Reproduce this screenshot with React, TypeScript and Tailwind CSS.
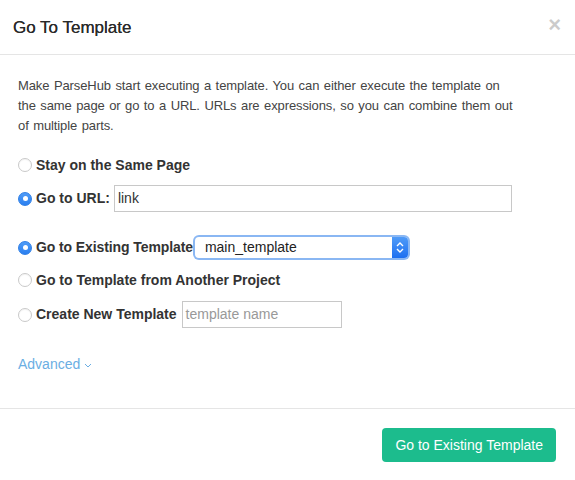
import React from "react";

function Radio({ checked }: { checked?: boolean }) {
  if (checked) {
    return (
      <span className="inline-flex h-[14px] w-[14px] shrink-0 items-center justify-center rounded-full bg-gradient-to-b from-[#4f9cf7] to-[#2a7ff0] border border-[#2f7fe6]">
        <span className="h-[5px] w-[5px] rounded-full bg-white" />
      </span>
    );
  }
  return (
    <span className="inline-block h-[14px] w-[14px] shrink-0 rounded-full border border-[#c9c9c9] bg-white shadow-[inset_0_1px_1px_rgba(0,0,0,0.05)]" />
  );
}

export default function App() {
  return (
    <div
      className="w-[575px] h-[480px] bg-white text-[#333] overflow-hidden"
      style={{ fontFamily: '"Liberation Sans", Arial, sans-serif' }}
    >
      {/* Header */}
      <div className="h-[55px] border-b border-[#e5e5e5] flex items-center justify-between pl-[13px] pr-[14px]">
        <h4 className="text-[17px] leading-[20px] text-[#2a2a2a] pt-[1px] [text-shadow:0_0_0.3px_#333]">Go To Template</h4>
        <span className="text-[22px] leading-none font-bold text-[#000] opacity-20 pb-[4px]">×</span>
      </div>

      {/* Body */}
      <div className="px-[18px] pt-[21px] pb-[34px]">
        <p className="w-[539px] whitespace-nowrap text-[13px] leading-[20px] tracking-[-0.1px] [word-spacing:1px] text-[#444]">
          Make ParseHub start executing a template. You can either execute the template on
          <br />
          the same page or go to a URL. URLs are expressions, so you can combine them out
          <br />
          of multiple parts.
        </p>

        <div className="mt-[19px] h-[20px] flex items-center">
          <Radio />
          <span className="ml-[4px] text-[14px] font-bold">Stay on the Same Page</span>
        </div>

        <div className="mt-[10px] h-[27px] flex items-center">
          <Radio checked />
          <span className="ml-[4px] text-[14px] font-bold">Go to URL:</span>
          <div className="ml-[4px] w-[398px] h-[27px] border border-[#c8c8c8] flex items-center px-[3px] text-[14px]">
            link
          </div>
        </div>

        <div className="mt-[24px] h-[23px] flex items-center">
          <Radio checked />
          <span className="ml-[4px] text-[14px] font-bold tracking-[-0.1px]">Go to Existing Template</span>
          <div className="w-[217px] h-[25px] rounded-[6px] bg-[#8ab7f3] p-[2px]">
            <div className="h-full w-full rounded-[4px] bg-white flex items-center justify-between overflow-hidden">
              <span className="pl-[10px] text-[14px] text-[#222]">main_template</span>
              <span className="h-full w-[16px] bg-gradient-to-b from-[#4f9bf8] to-[#1d6ff0] flex flex-col items-center justify-center gap-[1px]">
                <svg width="8" height="5" viewBox="0 0 8 5">
                  <path d="M1 4 L4 1 L7 4" fill="none" stroke="white" strokeWidth="1.4" />
                </svg>
                <svg width="8" height="5" viewBox="0 0 8 5">
                  <path d="M1 1 L4 4 L7 1" fill="none" stroke="white" strokeWidth="1.4" />
                </svg>
              </span>
            </div>
          </div>
        </div>

        <div className="mt-[11px] h-[20px] flex items-center">
          <Radio />
          <span className="ml-[4px] text-[14px] font-bold">Go to Template from Another Project</span>
        </div>

        <div className="mt-[11px] h-[27px] flex items-center">
          <Radio />
          <span className="ml-[4px] text-[14px] font-bold">Create New Template</span>
          <div className="ml-[5px] w-[160px] h-[27px] border border-[#c8c8c8] flex items-center px-[3px] text-[14px] text-[#999]">
            template name
          </div>
        </div>

        <div className="mt-[26px] h-[20px] flex items-center text-[14px] text-[#6aaee3]">
          Advanced
          <svg className="ml-[4px] mt-[2px]" width="8" height="5" viewBox="0 0 8 5">
            <path d="M1 1 L4 4 L7 1" fill="none" stroke="#6aaee3" strokeWidth="1" />
          </svg>
        </div>
      </div>

      {/* Footer */}
      <div className="border-t border-[#e5e5e5] pt-[19px] pr-[19px] flex justify-end">
        <button className="h-[34px] px-[13px] rounded-[4px] bg-[#1cbc8d] text-white text-[14px]">
          Go to Existing Template
        </button>
      </div>
    </div>
  );
}
